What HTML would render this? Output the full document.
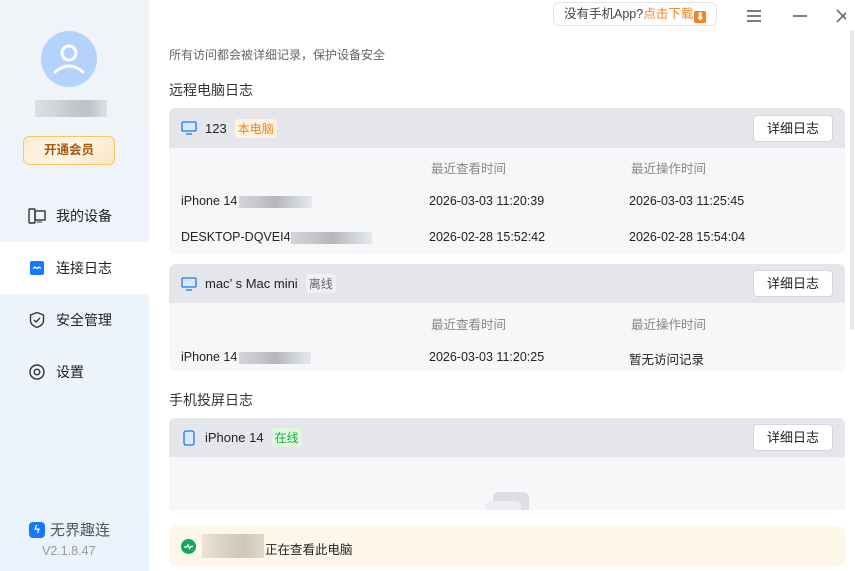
<!DOCTYPE html><html><head><meta charset="utf-8"><style>
*{margin:0;padding:0;box-sizing:border-box}
body{width:855px;height:571px;overflow:hidden;font-family:"Liberation Sans","Noto Sans CJK SC",sans-serif;background:#fff;position:relative;color:#222;font-size:13px}
.abs{position:absolute}
.side{left:0;top:0;width:149px;height:571px;background:linear-gradient(#f0f4f8,#eaf3fd)}
.nav{left:0;width:149px;height:52px;display:flex;align-items:center;padding-left:28px;font-size:14px;color:#222}
.nav svg{margin-right:10px}
.card-h{left:169px;width:676px;background:#e5e6eb;border-radius:6px 6px 0 0;display:flex;align-items:center;padding-left:12px}
.card-b{left:169px;width:676px;background:#f6f7f9;border-radius:0 0 6px 6px}
.btn{position:absolute;right:12px;top:7px;width:80px;height:27px;background:#fff;border:1px solid #d4d6db;border-radius:4px;font-size:13px;text-align:center;line-height:25px}
.tag{font-size:12px;padding:1px 3px;border-radius:3px;margin-left:8px}
.t{position:absolute;font-size:12.5px;color:#222}
.g{position:absolute;font-size:12.5px;color:#888}
.blur{display:inline-block;height:12px;vertical-align:middle;background:linear-gradient(90deg,#d2d4d8,#c6c8cb,#b5b7ba,#cdd0d4,#e6e8ee)}
.sec{position:absolute;left:169px;font-size:14px;color:#333}
</style></head><body>
<div class="abs side"></div>
<div class="abs" style="left:41px;top:31px;width:56px;height:56px;border-radius:50%;background:#b3d2fd"></div>
<svg class="abs" style="left:41px;top:31px" width="56" height="56"><circle cx="28" cy="22" r="7" fill="none" stroke="#fff" stroke-width="3"/><path d="M14 41q14-12 28 0" fill="none" stroke="#fff" stroke-width="3" stroke-linecap="round"/></svg>
<div class="abs" style="left:35px;top:100px;width:72px;height:17px;background:linear-gradient(90deg,#dcdfe3,#d3d6da,#c5c8cb,#bfc2c5,#dfe1e5)"></div>
<div class="abs" style="left:23px;top:136px;width:92px;height:29px;border:1.5px solid #fbc565;border-radius:6px;background:linear-gradient(135deg,#fdebd2,#fff6e8,#fde4c0);color:#a8590e;font-weight:bold;font-size:12.5px;text-align:center;line-height:26px">开通会员</div>
<div class="abs nav" style="top:190px"><svg width="18" height="16"><rect x="1" y="1" width="6" height="14" rx="1" fill="none" stroke="#333" stroke-width="1.4"/><rect x="7" y="3" width="10" height="9" fill="none" stroke="#333" stroke-width="1.4"/><path d="M9 14h5" stroke="#333"/></svg>我的设备</div>
<div class="abs nav" style="top:242px;background:#fff"><svg width="18" height="16"><rect x="2" y="1" width="14" height="14" rx="2" fill="#1677ff"/><path d="M5 8.5l2-1.5 2 1.5 2-1.5 2 1.5" stroke="#fff" fill="none" stroke-width="1.3"/></svg>连接日志</div>
<div class="abs nav" style="top:294px"><svg width="18" height="18"><path d="M9 1.5l6.5 2.5v6q0 4-6.5 6.5Q2.5 14 2.5 10V4z" fill="none" stroke="#333" stroke-width="1.4"/><path d="M6 9l2 2 4-4" fill="none" stroke="#333" stroke-width="1.4"/></svg>安全管理</div>
<div class="abs nav" style="top:346px"><svg width="18" height="18"><circle cx="9" cy="9" r="7" fill="none" stroke="#333" stroke-width="1.4"/><circle cx="9" cy="9" r="2.8" fill="none" stroke="#333" stroke-width="1.4"/></svg>设置</div>
<div class="abs" style="left:29px;top:519px;display:flex;align-items:center;font-size:15px;color:#555"><span style="display:inline-block;width:16px;height:16px;border-radius:4px;background:#1677ff;margin-right:5px;color:#fff;font-size:11px;text-align:center;line-height:16px;font-weight:bold">ϟ</span>无界趣连</div>
<div class="abs" style="left:42px;top:544px;font-size:12.5px;color:#999">V2.1.8.47</div>

<div class="abs" style="left:553px;top:2px;width:164px;height:24px;border:1px solid #e1e3e8;border-radius:6px;font-size:12.5px;color:#444;line-height:22px;padding-left:10px;white-space:nowrap">没有手机App?<span style="color:#f6811f">点击下载</span><span style="display:inline-block;width:12px;height:12px;background:#f6811f;border-radius:2px;vertical-align:-2px;margin-left:1px;color:#fff;font-size:9px;line-height:12px;text-align:center">⬇</span></div>
<svg class="abs" style="left:746px;top:8px" width="100" height="16"><path d="M1 3h14M1 8h14M1 13h14M47 8h14" stroke="#555" stroke-width="1.4"/><path d="M91 2l12 12M103 2L91 14" stroke="#555" stroke-width="1.4"/></svg>

<div class="abs" style="left:169px;top:46px;font-size:12px;color:#666">所有访问都会被详细记录，保护设备安全</div>
<div class="sec" style="top:80px">远程电脑日志</div>

<div class="abs card-h" style="top:108px;height:40px"><svg width="16" height="14" style="margin-right:8px"><rect x="1" y="1" width="14" height="9" rx="1" fill="#dbe8ff" stroke="#1677ff" stroke-width="1.3"/><path d="M5 13h6" stroke="#1677ff" stroke-width="1.3"/></svg>123<span class="tag" style="background:#fff3e0;color:#f6811f">本电脑</span><div class="btn">详细日志</div></div>
<div class="abs card-b" style="top:148px;height:106px"></div>
<div class="g" style="left:431px;top:158px">最近查看时间</div><div class="g" style="left:631px;top:158px">最近操作时间</div>
<div class="t" style="left:181px;top:194px">iPhone 14<span class="blur" style="width:73px;margin-left:2px"></span></div>
<div class="t" style="left:429px;top:194px">2026-03-03 11:20:39</div><div class="t" style="left:629px;top:194px">2026-03-03 11:25:45</div>
<div class="t" style="left:181px;top:230px">DESKTOP-DQVEI4<span class="blur" style="width:81px"></span></div>
<div class="t" style="left:429px;top:230px">2026-02-28 15:52:42</div><div class="t" style="left:629px;top:230px">2026-02-28 15:54:04</div>

<div class="abs card-h" style="top:264px;height:39px"><svg width="16" height="14" style="margin-right:8px"><rect x="1" y="1" width="14" height="9" rx="1" fill="#dbe8ff" stroke="#1677ff" stroke-width="1.3"/><path d="M5 13h6" stroke="#1677ff" stroke-width="1.3"/></svg>mac’ s Mac mini<span class="tag" style="background:#eef0f3;color:#666">离线</span><div class="btn" style="top:6px">详细日志</div></div>
<div class="abs card-b" style="top:303px;height:68px"></div>
<div class="g" style="left:431px;top:314px">最近查看时间</div><div class="g" style="left:631px;top:314px">最近操作时间</div>
<div class="t" style="left:181px;top:350px">iPhone 14<span class="blur" style="width:72px;margin-left:2px"></span></div>
<div class="t" style="left:429px;top:350px">2026-03-03 11:20:25</div><div class="t" style="left:629px;top:349px">暂无访问记录</div>

<div class="sec" style="top:390px">手机投屏日志</div>
<div class="abs card-h" style="top:418px;height:39px"><svg width="12" height="16" style="margin-right:10px;margin-left:2px"><rect x="1" y="1" width="10" height="14" rx="2" fill="#dbe8ff" stroke="#1677ff" stroke-width="1.3"/></svg>iPhone 14<span class="tag" style="background:#dff7e3;color:#1fae3c">在线</span><div class="btn" style="top:6px">详细日志</div></div>
<div class="abs card-b" style="top:457px;height:53px;border-radius:0"></div>
<div class="abs" style="left:493px;top:492px;width:36px;height:18px;border-radius:6px 6px 0 0;background:#dcdde5"></div>
<div class="abs" style="left:485px;top:501px;width:36px;height:9px;border-radius:5px 5px 0 0;background:#eceef3"></div>

<div class="abs" style="left:169px;top:526px;width:676px;height:40px;background:#fdf7ea;border-radius:6px"></div>
<svg class="abs" style="left:181px;top:539px" width="15" height="15"><circle cx="7.5" cy="7.5" r="7.5" fill="#14a85b"/><path d="M3 8h2.5l1.5-2 1.5 3.5 1.5-2H12" stroke="#fff" fill="none" stroke-width="1.3"/></svg>
<div class="abs" style="left:202px;top:534px;width:62px;height:24px;background:linear-gradient(90deg,#ede3d6,#ddd3c4,#cfc5b8,#e1d8cc)"></div>
<div class="abs" style="left:265px;top:539px;font-size:12.5px;color:#222">正在查看此电脑</div>
<div class="abs" style="left:850px;top:30px;width:4px;height:300px;background:#e6e7e9;border-radius:2px"></div>
</body></html>
